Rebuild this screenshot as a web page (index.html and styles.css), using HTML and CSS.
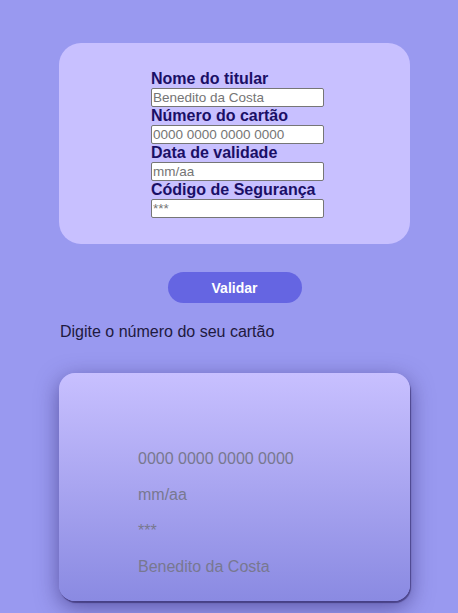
FILE: index.html
```html
<!DOCTYPE html>
<html lang="pt">
<head>
<meta charset="utf-8">
<link rel="stylesheet" href="styles.css">
</head>
<body>
<main class="page">
  <form class="panel">
    <div class="fields">
      <label class="label" for="nome">Nome do titular</label>
      <input class="input" id="nome" type="text" placeholder="Benedito da Costa">
      <label class="label" for="numero">Número do cartão</label>
      <input class="input" id="numero" type="text" placeholder="0000 0000 0000 0000">
      <label class="label" for="validade">Data de validade</label>
      <input class="input" id="validade" type="text" placeholder="mm/aa">
      <label class="label" for="cvv">Código de Segurança</label>
      <input class="input" id="cvv" type="text" placeholder="***">
    </div>
  </form>
  <div class="actions">
    <button class="btn" type="button">Validar</button>
  </div>
  <p class="hint">Digite o número do seu cartão</p>
  <section class="card">
    <p class="card-line">0000 0000 0000 0000</p>
    <p class="card-line">mm/aa</p>
    <p class="card-line">***</p>
    <p class="card-line">Benedito da Costa</p>
  </section>
</main>
</body>
</html>
```
FILE: styles.css
```css
html, body {
  margin: 0;
  padding: 0;
}
body {
  background: #9999f0;
  font-family: "Liberation Sans", Arial, sans-serif;
  height: 613px;
  overflow: hidden;
}
.page {
  padding: 43px 0 0 59px;
  width: 351px;
}
.panel {
  background: #c8c0ff;
  border-radius: 22px;
  padding: 27px 0 26px 92px;
  margin: 0;
}
.fields {
  display: flex;
  flex-direction: column;
  align-items: flex-start;
}
.label {
  font-weight: bold;
  font-size: 16px;
  line-height: 18px;
  color: #1a0f66;
}
.input {
  box-sizing: border-box;
  width: 173px;
  height: 19px;
  margin: 0;
  padding: 0 1px;
  border: 1px solid #767676;
  border-radius: 2px;
  background: #fff;
  font-family: "Liberation Sans", Arial, sans-serif;
  font-size: 13.5px;
}
.input::placeholder {
  color: #757575;
}
.actions {
  display: flex;
  justify-content: center;
  padding-top: 28px;
}
.btn {
  width: 134px;
  height: 31px;
  border: none;
  border-radius: 16px;
  background: #6565e2;
  color: #fff;
  font-family: "Liberation Sans", Arial, sans-serif;
  font-weight: bold;
  font-size: 14px;
}
.hint {
  margin: 12px 0 0 1px;
  font-size: 16px;
  line-height: 34px;
  color: #1e1a40;
}
.card {
  margin-top: 24px;
  height: 228px;
  box-sizing: border-box;
  border-radius: 16px;
  background: linear-gradient(180deg, #c8c0ff 0%, #8a8ae2 100%);
  box-shadow: 1px 2px 1px rgba(40, 30, 90, 0.55), 0 6px 22px rgba(40, 30, 100, 0.55);
  padding: 76px 0 0 79px;
  display: flex;
  flex-direction: column;
  gap: 17px;
}
.card-line {
  margin: 0;
  font-size: 16px;
  line-height: 19px;
  color: #787890;
}
```
